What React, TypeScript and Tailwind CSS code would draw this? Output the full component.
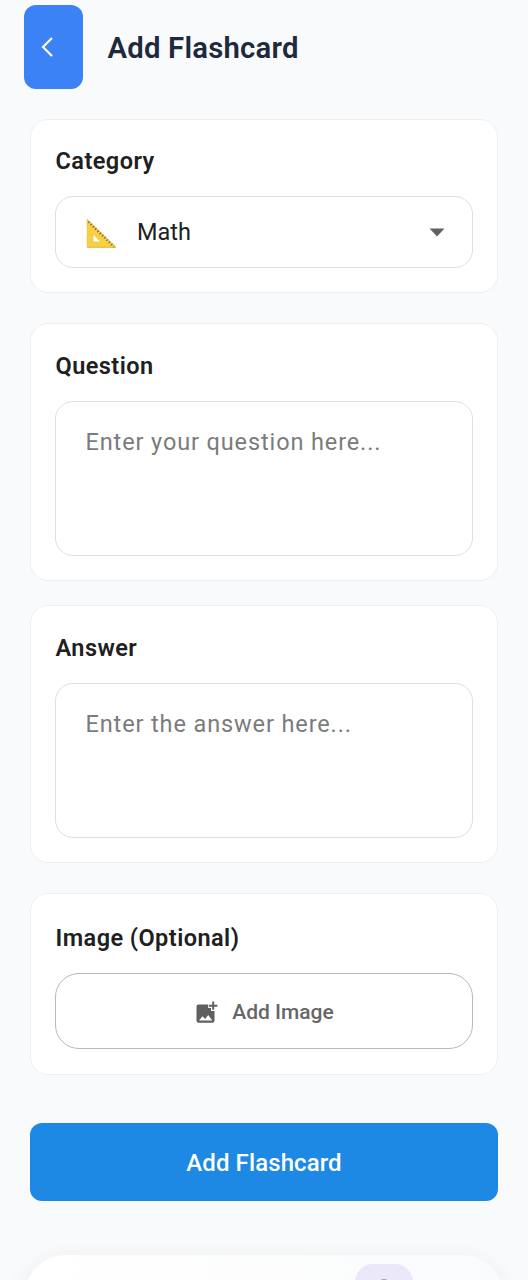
import type { ReactNode } from 'react';

function SetSquare() {
  return (
    <svg className="mt-0.5 h-8 w-8 shrink-0" viewBox="0 0 32 32" fill="none">
      <path fillRule="evenodd" d="M2 2.2 31 30.5H2ZM8 17.5V25H15.5Z" fill="#f9d03f" />
      <path d="M2 30.3H30.5" stroke="#d9ad3c" strokeWidth="0.8" />
      <path d="M2.2 3V30" stroke="#edc247" strokeWidth="0.6" />
      <path d="M8 17.5V25H15.5" stroke="#e6b93a" strokeWidth="0.6" />
      <path d="M3.4 4.8 29 29.6" stroke="#7b6a3c" strokeWidth="2.4" strokeDasharray="1.2 2" />
      <path d="M2 2.2 31 30.5" stroke="#c49c35" strokeWidth="0.7" />
    </svg>
  );
}

function AddImageIcon() {
  return (
    <svg className="h-6 w-6 shrink-0" viewBox="0 0 24 24" fill="#5f5f5f">
      <path
        fillRule="evenodd"
        d="M4.5 3.5H14.2V7H17V10H20.5V19.8Q20.5 21.8 18.5 21.8H4.5Q2.5 21.8 2.5 19.8V5.5Q2.5 3.5 4.5 3.5ZM5 19.5H18.3L14.2 14L11.2 18L8.5 15.2Z"
      />
      <path d="M18.2 .5H20.2V3.7H23.4V5.7H20.2V8.8H18.2V5.7H15V3.7H18.2Z" />
    </svg>
  );
}

function Card({ title, className, children }: { title: string; className: string; children: ReactNode }) {
  return (
    <section className={`mx-[30px] shrink-0 rounded-[18px] border border-[#eeeff1] bg-white px-6 ${className}`}>
      <h2 className="pl-[0.5px] text-[23.5px] leading-7 font-semibold tracking-[0.45px] text-[#202020]">{title}</h2>
      {children}
    </section>
  );
}

export default function App() {
  return (
    <div className="flex h-[1280px] w-[528px] flex-col overflow-hidden bg-[#f9fafc] font-['Roboto',sans-serif]">
      <header className="flex h-[119px] shrink-0 items-start pt-[5px] pl-6">
        <button className="flex h-[84px] w-[59px] items-center rounded-[12px] bg-[#3b82f6] pl-[17px]">
          <svg className="h-5 w-3" viewBox="0 0 12 20" fill="none" stroke="white" strokeWidth="2.2">
            <path d="M11 1 2 10l9 9" />
          </svg>
        </button>
        <h1 className="mt-[25px] ml-[24.5px] text-[29.3px] leading-9 font-semibold tracking-[0.2px] text-[#1e293b]">
          Add Flashcard
        </h1>
      </header>

      <Card title="Category" className="h-[174px] pt-[27px]">
        <div className="mt-[21px] flex h-[72px] items-center rounded-[18px] border border-[#dfdfdf] pr-[27px] pl-[29px]">
          <SetSquare />
          <span className="ml-5 text-[23.5px] leading-7 text-[#212121]">Math</span>
          <svg className="mt-px ml-auto h-[9px] w-4" viewBox="0 0 16 9" fill="#616161">
            <path d="M.5.5h15L8 8.5Z" />
          </svg>
        </div>
      </Card>

      <Card title="Question" className="mt-[30px] h-[258px] pt-[28px]">
        <textarea
          placeholder="Enter your question here..."
          className="mt-[21px] block h-[155px] w-full resize-none rounded-[18px] border border-[#dfdfdf] px-[29.5px] py-[26px] text-[23.5px] leading-7 tracking-[0.88px] placeholder:text-[#7b7b7b]"
        />
      </Card>

      <Card title="Answer" className="mt-6 h-[258px] pt-[28px]">
        <textarea
          placeholder="Enter the answer here..."
          className="mt-[21px] block h-[155px] w-full resize-none rounded-[18px] border border-[#dfdfdf] px-[29.5px] py-[26px] text-[23.5px] leading-7 tracking-[0.88px] placeholder:text-[#7b7b7b]"
        />
      </Card>

      <Card title="Image (Optional)" className="mt-[30px] h-[182px] pt-[30px]">
        <button className="mt-[21px] flex h-[76px] w-full items-center justify-center gap-3.5 rounded-[24px] border border-[#b9b9b9] pt-[3px] text-[21px] font-medium text-[#666666]">
          <AddImageIcon />
          Add Image
        </button>
      </Card>

      <button className="mx-[30px] mt-12 h-[78px] shrink-0 rounded-[12px] bg-[#1e88e5] pt-px text-[24px] font-medium tracking-[0.1px] text-white">
        Add Flashcard
      </button>

      <nav className="mx-6 mt-[54px] flex h-[100px] shrink-0 justify-end rounded-[42px] bg-linear-to-r from-white to-[#fafbfc] pt-[9px] pr-[91px] shadow-[0_6px_24px_rgba(30,41,59,0.07)]">
        <div className="flex h-[60px] w-[58px] justify-center rounded-[18px] bg-[#ebe9f9] pt-[15px]">
          <div className="h-3 w-3 rounded-full border-2 border-[#9d9ab3]" />
        </div>
      </nav>
    </div>
  );
}
